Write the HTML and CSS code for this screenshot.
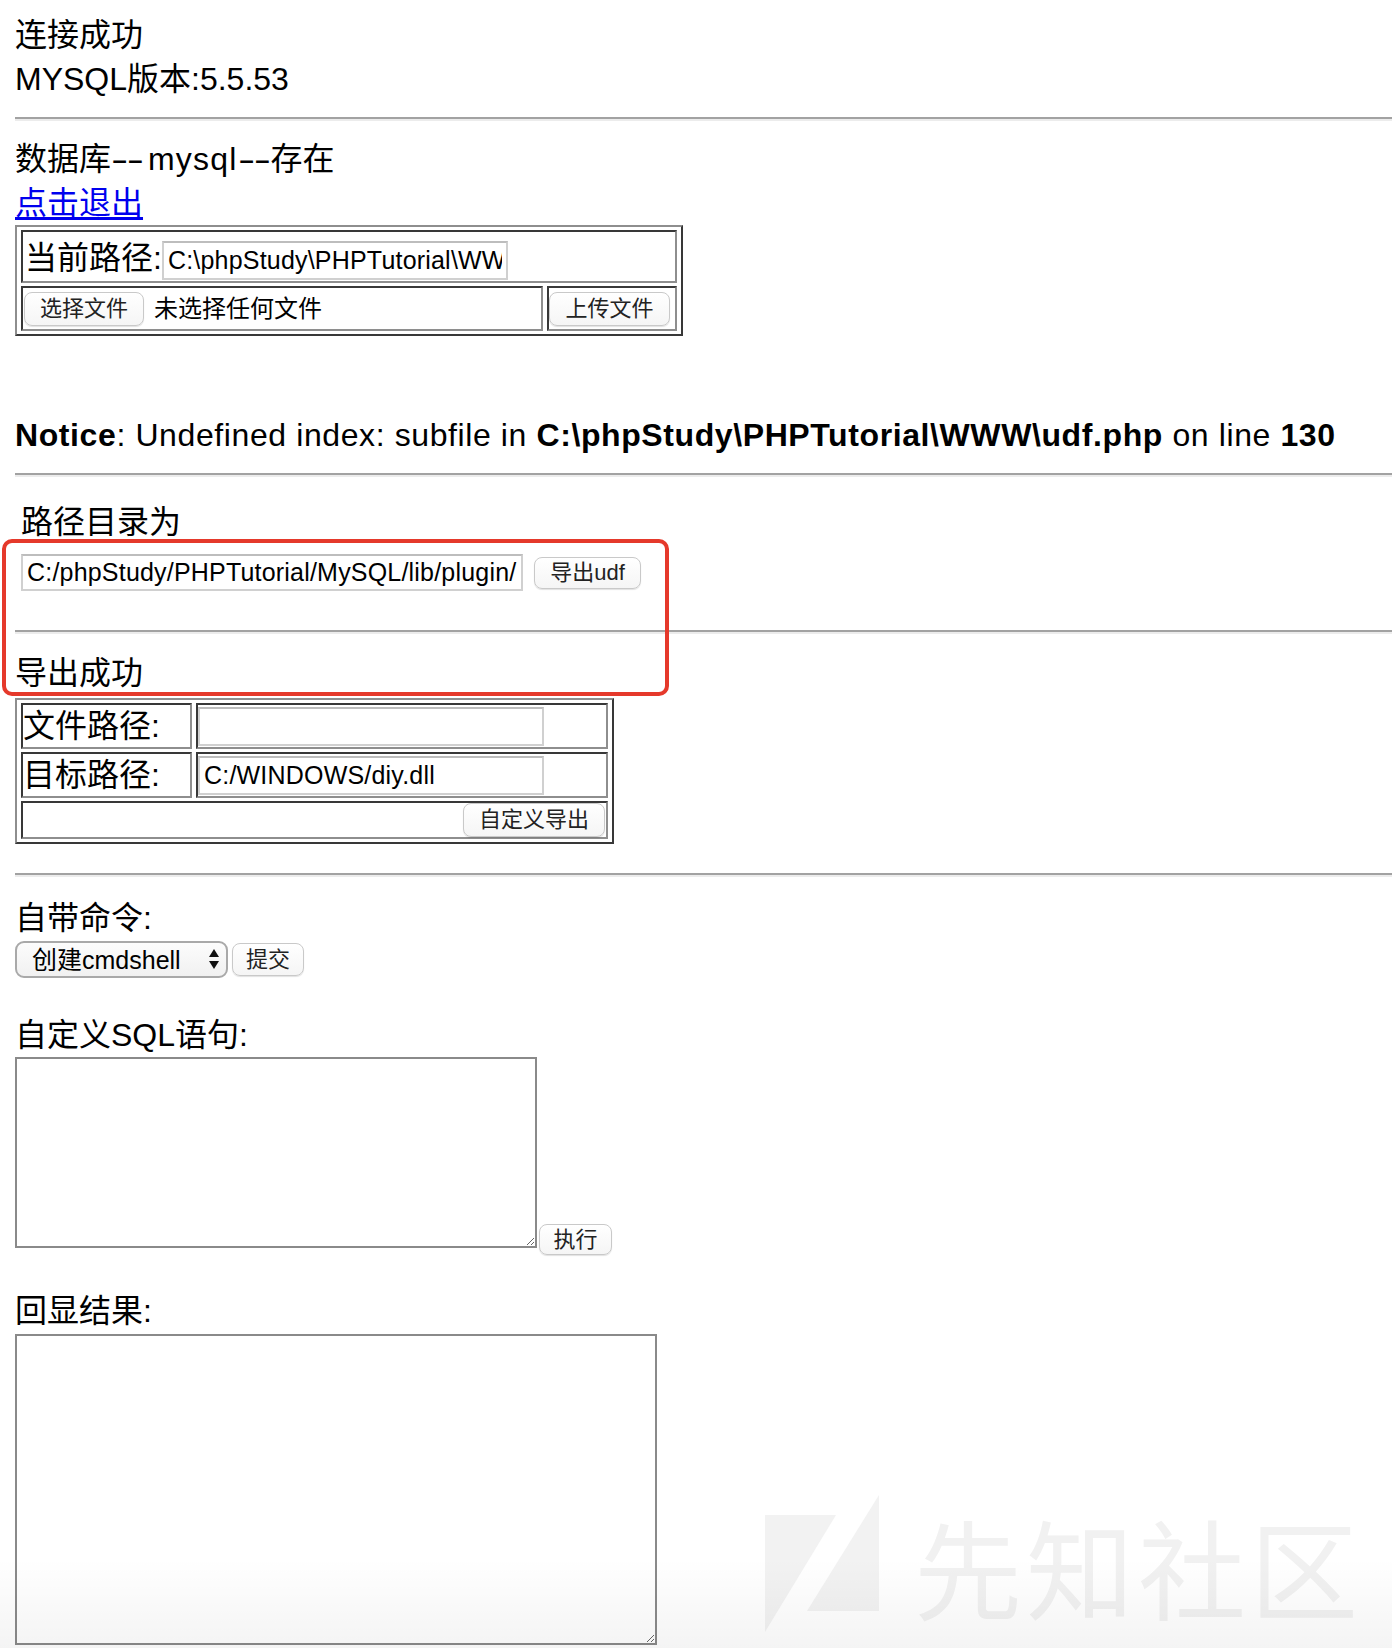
FILE: index.html
```html
<!DOCTYPE html>
<html lang="zh-CN">
<head>
<meta charset="utf-8">
<title>UDF</title>
<link rel="stylesheet" href="styles.css">
</head>
<body>
<div class="page">
  <div class="line">连接成功</div>
  <div class="line">MYSQL版本:5.5.53</div>
  <hr class="rule rule-first">
  <div class="line after-rule">数据库<span class="dash"><span class="dash-glyph">--</span></span><span class="dbname">mysql</span><span class="dash dash-short"><span class="dash-glyph">--</span></span>存在</div>
  <div class="line"><a class="link" href="#">点击退出</a></div>
  <form class="upload-form">
    <table class="grid grid-upload">
      <tr>
        <td class="cell" colspan="2">
          <div class="cell-box path-box">
            <span class="label">当前路径:</span>
            <input class="field field-path" type="text" value="C:\phpStudy\PHPTutorial\WWW\">
          </div>
        </td>
      </tr>
      <tr>
        <td class="cell">
          <div class="cell-box file-box">
            <span class="btn btn-file">选择文件</span>
            <span class="file-name">未选择任何文件</span>
          </div>
        </td>
        <td class="cell">
          <div class="cell-box submit-box">
            <button class="btn btn-upload" type="button">上传文件</button>
          </div>
        </td>
      </tr>
    </table>
  </form>
  <div class="line notice"><b>Notice</b>: Undefined index: subfile in <b>C:\phpStudy\PHPTutorial\WWW\udf.php</b> on line <b>130</b></div>
  <hr class="rule">
  <form class="export-form">
    <div class="line dir-label">路径目录为</div>
    <div class="export-row">
      <input class="field field-dir" type="text" value="C:/phpStudy/PHPTutorial/MySQL/lib/plugin/">
      <button class="btn btn-export" type="button">导出udf</button>
    </div>
  </form>
  <hr class="rule rule-export">
  <div class="line done">导出成功</div>
  <table class="grid grid-custom">
    <tr>
      <td class="cell"><div class="cell-box key-box">文件路径:</div></td>
      <td class="cell"><div class="cell-box val-box"><input class="field field-cell" type="text" value=""></div></td>
    </tr>
    <tr>
      <td class="cell"><div class="cell-box key-box">目标路径:</div></td>
      <td class="cell"><div class="cell-box val-box"><input class="field field-cell" type="text" value="C:/WINDOWS/diy.dll"></div></td>
    </tr>
    <tr>
      <td class="cell" colspan="2"><div class="cell-box action-box"><button class="btn btn-custom" type="button">自定义导出</button></div></td>
    </tr>
  </table>
  <hr class="rule rule-cmd">
  <div class="line cmd-label">自带命令:</div>
  <div class="cmd-row">
    <div class="select-wrap">
      <select class="select">
        <option>创建cmdshell</option>
      </select>
      <svg class="select-arrows" width="12" height="22" viewBox="0 0 12 22" aria-hidden="true">
        <polygon points="6,1 11,9 1,9" fill="#111"/>
        <polygon points="1,13 11,13 6,21" fill="#111"/>
      </svg>
    </div>
    <button class="btn btn-cmd" type="button">提交</button>
  </div>
  <div class="line sql-label">自定义SQL语句:</div>
  <div class="sql-row">
    <textarea class="area area-sql"></textarea>
    <button class="btn btn-run" type="button">执行</button>
  </div>
  <div class="line result-label">回显结果:</div>
  <textarea class="area area-result"></textarea>

  <div class="annotation"></div>
  <div class="watermark">
    <svg class="wm-logo" width="116" height="140" viewBox="0 0 116 140" aria-hidden="true">
      <polygon points="1,20 72,20 1,137" fill="#f2f2f2"/>
      <polygon points="115,0 115,116 43,116" fill="#f2f2f2"/>
    </svg>
    <span class="wm-text">先知社区</span>
  </div>
  <div class="fade"></div>
</div>
</body>
</html>
```
FILE: styles.css
```css
* {
  box-sizing: border-box;
}

html,
body {
  margin: 0;
  padding: 0;
  background: #ffffff;
}

body {
  font-family: "Liberation Sans", "Noto Sans CJK SC", sans-serif;
  font-size: 32px;
  line-height: 44px;
  color: #000000;
  overflow: hidden;
}

.page {
  position: relative;
  height: 1648px;
  padding: 13px 0 0 15px;
  overflow: hidden;
}

.line {
  height: 44px;
  white-space: nowrap;
}

.dash {
  display: inline-block;
  width: 37px;
  vertical-align: top;
  overflow: visible;
}

.dash-short {
  width: 33px;
}

.dash-glyph {
  display: inline-block;
  transform: scaleX(1.62);
  transform-origin: 0 50%;
  letter-spacing: -1px;
}

.dbname {
  letter-spacing: 1.2px;
}

.link {
  color: #0000ee;
  text-decoration: underline;
  text-underline-offset: 3px;
}

.rule {
  display: block;
  height: 0;
  margin: 16px 0 0 0;
  border: 0;
  border-top: 2px solid #a2a2a2;
  border-bottom: 2px solid #ececec;
}

.after-rule {
  margin-top: 16px;
}

/* tables */
.upload-form {
  margin: 0;
}

.grid {
  border-collapse: separate;
  border-spacing: 4px 3px;
  border: 2px solid;
  border-color: #8e8e8e #383838 #383838 #8e8e8e;
}

.cell {
  padding: 0;
  border: 2px solid;
  border-color: #383838 #8e8e8e #8e8e8e #383838;
}

.cell-box {
  display: flex;
  align-items: center;
  white-space: nowrap;
}

.path-box {
  height: 49px;
  align-items: flex-end;
  padding: 0 2px 1px 2px;
}

.label {
  line-height: 44px;
}

.file-box {
  width: 518px;
  height: 41px;
  padding-left: 1px;
  gap: 10px;
}

.submit-box {
  width: 126px;
  height: 41px;
  padding-left: 0;
}

.file-name {
  font-size: 24px;
  line-height: 30px;
}

.grid-custom .key-box {
  width: 167px;
  height: 42px;
  padding-left: 0;
}

.grid-custom .val-box {
  width: 408px;
  height: 42px;
  padding-left: 0;
}

.action-box {
  height: 34px;
  justify-content: flex-end;
  padding-right: 1px;
}

/* form fields */
.field {
  font-family: "Liberation Sans", "Noto Sans CJK SC", sans-serif;
  font-size: 25px;
  letter-spacing: 0.2px;
  color: #000000;
  background: #ffffff;
  border: 2px solid #d0d0d0;
  border-top-color: #bdbdbd;
  border-radius: 0;
  padding: 0 4px;
  margin: 0;
  outline: none;
}

.field-path {
  width: 346px;
  height: 39px;
}

.field-dir {
  width: 502px;
  height: 37px;
}

.field-cell {
  width: 346px;
  height: 39px;
}

.btn {
  display: inline-flex;
  align-items: center;
  justify-content: center;
  height: 33px;
  padding: 0 15px;
  margin: 0;
  font-family: "Liberation Sans", "Noto Sans CJK SC", sans-serif;
  font-size: 22px;
  line-height: 30px;
  color: #222222;
  background: linear-gradient(#ffffff, #f5f5f5);
  border: 1px solid #c9c9c9;
  border-radius: 8px;
  box-shadow: 0 1px 1px rgba(0, 0, 0, 0.12);
  white-space: nowrap;
}

.btn-file {
  width: 120px;
  height: 34px;
}

.btn-upload {
  width: 121px;
  height: 34px;
}

.btn-export {
  width: 107px;
  height: 32px;
}

.btn-custom {
  width: 142px;
  height: 34px;
}

.btn-cmd {
  width: 72px;
  height: 33px;
}

.btn-run {
  width: 73px;
  height: 31px;
  margin-bottom: -7px;
}

/* export section */
.notice {
  margin-top: 77px;
  letter-spacing: 0.6px;
}

.export-form {
  margin: 0;
}

.dir-label {
  margin-top: 23px;
  padding-left: 6px;
}

.export-row {
  display: flex;
  align-items: center;
  gap: 11px;
  height: 37px;
  margin-top: 10px;
  padding-left: 6px;
}

.rule-export {
  margin-top: 39px;
}

.done {
  margin-top: 17px;
}

.grid-custom {
  margin-top: 3px;
}

.rule-cmd {
  margin-top: 29px;
}

.cmd-label {
  margin-top: 19px;
}

.cmd-row {
  display: flex;
  align-items: center;
  gap: 4px;
  height: 37px;
  margin-top: 1px;
}

.select-wrap {
  position: relative;
  width: 213px;
  height: 37px;
}

.select {
  -webkit-appearance: none;
  appearance: none;
  display: block;
  width: 213px;
  height: 37px;
  padding: 0 30px 0 15px;
  font-family: "Liberation Sans", "Noto Sans CJK SC", sans-serif;
  font-size: 25px;
  color: #000000;
  background: linear-gradient(#fcfcfc, #f1f1f1);
  border: 2px solid #a9a9a9;
  border-radius: 9px;
  outline: none;
}

.select-arrows {
  position: absolute;
  right: 8px;
  top: 7px;
  pointer-events: none;
}

.sql-label {
  margin-top: 35px;
}

.sql-row {
  display: flex;
  align-items: flex-end;
  gap: 2px;
}

.area {
  display: block;
  margin: 0;
  padding: 4px;
  font-family: "Liberation Mono", monospace;
  font-size: 22px;
  background: #ffffff;
  border: 2px solid #8a8a8a;
  border-radius: 0;
  outline: none;
}

.area-sql {
  width: 522px;
  height: 191px;
}

.result-label {
  margin-top: 41px;
}

.area-result {
  width: 642px;
  height: 311px;
  margin-top: 1px;
}

/* overlays */
.annotation {
  position: absolute;
  left: 2px;
  top: 539px;
  width: 667px;
  height: 157px;
  border: 4px solid #e5392b;
  border-radius: 10px;
  pointer-events: none;
}

.watermark {
  position: absolute;
  left: 764px;
  top: 1495px;
  display: flex;
  align-items: flex-start;
  gap: 34px;
  pointer-events: none;
}

.wm-logo {
  display: block;
}

.wm-text {
  font-family: "Noto Sans CJK SC", sans-serif;
  font-size: 108px;
  line-height: 140px;
  letter-spacing: 4px;
  color: #f1f1f1;
  white-space: nowrap;
}

.fade {
  position: absolute;
  left: 0;
  right: 0;
  bottom: 0;
  height: 90px;
  background: linear-gradient(rgba(0, 0, 0, 0), rgba(0, 0, 0, 0.045));
  pointer-events: none;
}
```
